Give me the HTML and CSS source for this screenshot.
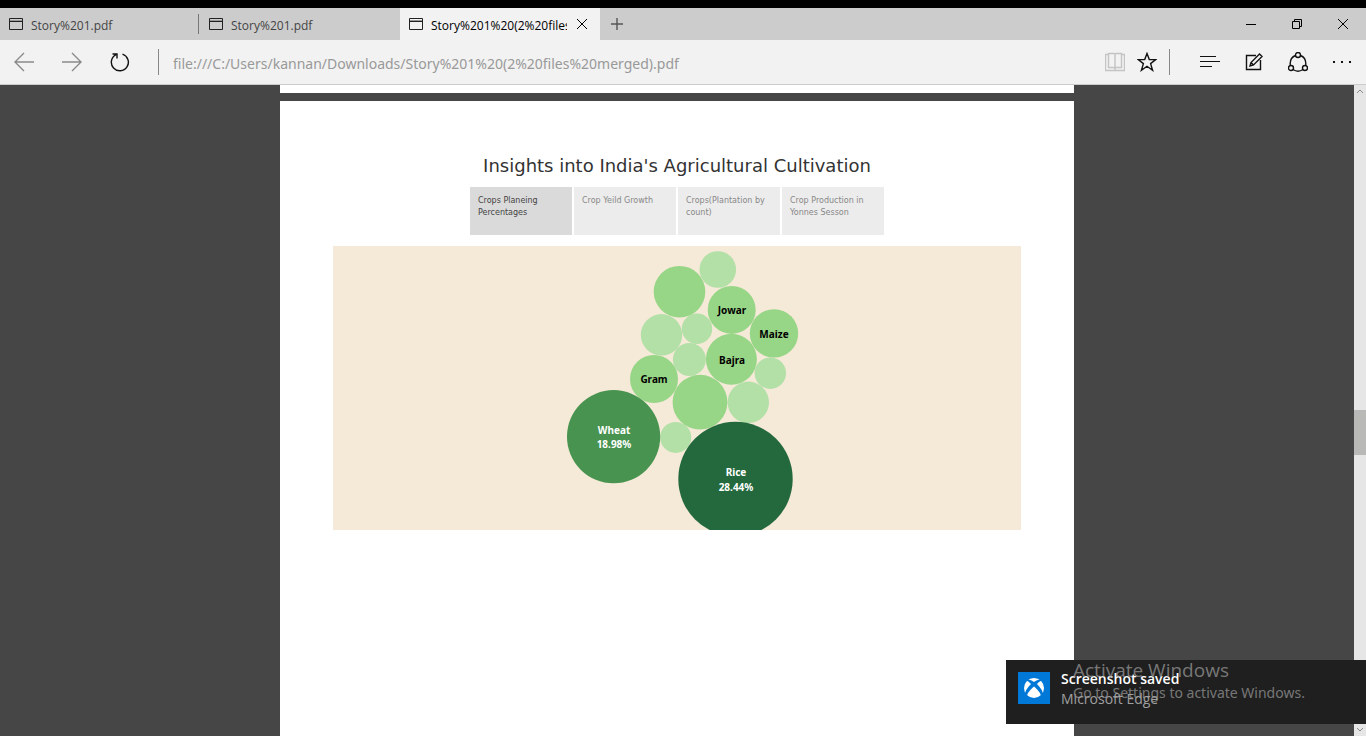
FILE: index.html
```html
<!DOCTYPE html>
<html lang="en">
<head>
<meta charset="utf-8">
<meta name="viewport" content="width=device-width, initial-scale=1">
<title>Story%201%20(2%20files%20merged).pdf</title>
<link rel="stylesheet" href="styles.css">
</head>
<body>
<header class="browser">
  <div class="tab-strip">
    <div class="tab tab-divided">
      <svg class="tab-icon" viewBox="0 0 14 12"><path class="shade" d="M1 2.500h12"/><path d="M.5 .5h13v11H.5zM1 3.500h12"/></svg>
      <button class="tab-title" type="button">Story%201.pdf</button>
    </div>
    <div class="tab">
      <svg class="tab-icon" viewBox="0 0 14 12"><path class="shade" d="M1 2.500h12"/><path d="M.5 .5h13v11H.5zM1 3.500h12"/></svg>
      <button class="tab-title" type="button">Story%201.pdf</button>
    </div>
    <div class="tab tab-active">
      <svg class="tab-icon" viewBox="0 0 14 12"><path class="shade" d="M1 2.500h12"/><path d="M.5 .5h13v11H.5zM1 3.500h12"/></svg>
      <button class="tab-title" type="button">Story%201%20(2%20files%20merged).pdf</button>
      <button class="tab-close" type="button" aria-label="Close tab"><svg width="10" height="10" viewBox="0 0 10 10"><path d="M0 0l10 10M10 0L0 10"/></svg></button>
    </div>
    <button class="new-tab" type="button" aria-label="New tab"><svg class="bold-icon" width="12" height="12" viewBox="0 0 12 12"><path d="M6 0v12M0 6h12"/></svg></button>
    <div class="window-controls">
      <button type="button" aria-label="Minimize"><svg width="10" height="10" viewBox="0 0 10 10"><path d="M0 5.500h10"/></svg></button>
      <button type="button" aria-label="Restore"><svg width="10" height="10" viewBox="0 0 10 10"><path d="M.5 2.500h7v7h-7zM2.500 2.500v-2h7v7h-2"/></svg></button>
      <button type="button" aria-label="Close"><svg width="10" height="10" viewBox="0 0 10 10"><path d="M0 0l10 10M10 0L0 10"/></svg></button>
    </div>
  </div>
  <div class="toolbar">
    <button class="nav-button muted" type="button" aria-label="Back"><svg class="bold-icon" width="20" height="20" viewBox="0 0 20 20"><path d="M20 10H1M10 1L1 10l9 9"/></svg></button>
    <button class="nav-button muted" type="button" aria-label="Forward"><svg class="bold-icon" width="20" height="20" viewBox="0 0 20 20"><path d="M0 10h19M10 1l9 9-9 9"/></svg></button>
    <button class="nav-button" type="button" aria-label="Refresh"><svg class="bold-icon" width="20" height="20" viewBox="0 0 20 20"><path d="M12.500 2.200A8.500 8.500 0 1 1 6 2.700M2.500 2H7v4.500"/></svg></button>
    <span class="divider"></span>
    <input class="address" type="text" aria-label="Address" value="file:///C:/Users/kannan/Downloads/Story%201%20(2%20files%20merged).pdf">
    <button class="page-button faint" type="button" aria-label="Reading view"><svg class="bold-icon" width="20" height="20" viewBox="0 0 20 20"><path d="M3 2.500H.5v16h19v-16H17M3.500 1.500H9l1 1 1-1h5.500v14H11l-1 1-1-1H3.500zM10 2v16"/></svg></button>
    <button class="page-button" type="button" aria-label="Favorite"><svg class="bold-icon" width="20" height="20" viewBox="0 0 20 20"><path d="M10 1.500l2.300 6.100h6.500l-5.200 4 2 6.700L10 14.300l-5.600 4 2-6.700-5.200-4h6.500z"/></svg></button>
    <span class="divider"></span>
    <div class="tools">
      <button type="button" aria-label="Hub"><svg width="20" height="20" viewBox="0 0 20 20"><path d="M0 4.500h16M0 9.500h20M0 14.500h12"/></svg></button>
      <button type="button" aria-label="Make a web note"><svg class="bold-icon" width="18" height="18" viewBox="0 0 18 18"><path d="M11 2.500H1.500v14h14V7M5 13l1-3.500L14.500 1l2.500 2.500L8.500 12zM6 9.500L8.500 12"/></svg></button>
      <button type="button" aria-label="Share"><svg class="bold-icon" width="20" height="20" viewBox="0 0 20 20"><circle cx="10" cy="3" r="2.500"/><circle cx="3" cy="16" r="2.500"/><circle cx="17" cy="16" r="2.500"/><path d="M7.500 3.500C3.500 5 1.800 9 2.300 13.400M12.500 3.500c4 1.500 5.700 5.500 5.200 9.900M5 17.500c3 2 7 2 10 0"/></svg></button>
      <button type="button" aria-label="More"><svg width="18" height="4" viewBox="0 0 18 4"><path class="solid" d="M0 1h2v2H0zM8 1h2v2H8zM16 1h2v2h-2z"/></svg></button>
    </div>
  </div>
</header>

<main class="viewer">
  <div class="document">
    <div class="sheet sheet-end"></div>
    <article class="sheet sheet-current">
      <h1 class="story-title">Insights into India's Agricultural Cultivation</h1>
      <nav class="story-points">
        <button class="point point-active" type="button">Crops Planeing Percentages</button>
        <button class="point" type="button">Crop Yeild Growth</button>
        <button class="point" type="button">Crops(Plantation by count)</button>
        <button class="point" type="button">Crop Production in Yonnes Sesson</button>
      </nav>
      <svg class="chart" viewBox="333 246 688 284" role="img" aria-label="Crop planting percentages">
        <g class="light">
          <circle cx="717.800" cy="269.500" r="18.300"/>
          <circle cx="661.500" cy="334.800" r="20.700"/>
          <circle cx="697" cy="328.700" r="15.200"/>
          <circle cx="689.400" cy="359.400" r="16.500"/>
          <circle cx="770.300" cy="373.200" r="15.700"/>
          <circle cx="748.300" cy="402.300" r="20.700"/>
          <circle cx="675.700" cy="437.400" r="15.500"/>
        </g>
        <g class="medium">
          <circle cx="679.500" cy="291.700" r="25.800"/>
          <circle cx="731.700" cy="309.900" r="24"/>
          <circle cx="774" cy="333.400" r="24.200"/>
          <circle cx="731.400" cy="359.300" r="25.500"/>
          <circle cx="654" cy="379" r="24"/>
          <circle cx="700" cy="402.200" r="27.400"/>
        </g>
        <circle class="wheat" cx="613.600" cy="436.700" r="46.600"/>
        <circle class="rice" cx="735.500" cy="479" r="57.200"/>
        <g class="label">
          <text x="732" y="314">Jowar</text>
          <text x="774" y="338">Maize</text>
          <text x="732" y="364">Bajra</text>
          <text x="654" y="383">Gram</text>
        </g>
        <g class="label label-light">
          <text x="614" y="434">Wheat</text>
          <text x="614" y="448">18.98%</text>
          <text x="736" y="476">Rice</text>
          <text x="736" y="491">28.44%</text>
        </g>
      </svg>
    </article>
  </div>
  <div class="scrollbar">
    <svg width="8" height="5" viewBox="0 0 8 5"><path d="M1 4l3-3 3 3"/></svg>
    <div class="track"><div class="thumb"></div></div>
    <svg width="8" height="5" viewBox="0 0 8 5"><path d="M1 1l3 3 3-3"/></svg>
  </div>
</main>

<aside class="toast">
  <svg class="toast-logo" width="32" height="32" viewBox="0 0 32 32">
    <rect width="32" height="32" fill="#0078d7"/>
    <circle cx="16" cy="16" r="10" fill="#fff"/>
    <path fill="#0078d7" d="M8 8.500C11 6.500 14 8.500 16 10c2-1.500 5-3.500 8-1.500l1 .5c-2-1-4 1-6 3 3 3 6.500 7.500 6 11l-2 2c.5-3.500-4-8-7-10.500C13 17 8.500 21.500 9 25l-2-2c-.5-3.500 3-8 6-11-2-2-4-4-6-3z"/>
  </svg>
  <div class="toast-text">
    <strong class="toast-title">Screenshot saved</strong>
    <span class="toast-source">Microsoft Edge</span>
  </div>
</aside>
<div class="watermark">
  <div class="watermark-title">Activate Windows</div>
  <div class="watermark-text">Go to Settings to activate Windows.</div>
</div>
</body>
</html>
```

FILE: styles.css
```css
* { box-sizing: border-box; }

body {
  margin: 0;
  height: 100vh;
  display: flex;
  flex-direction: column;
  overflow: hidden;
  background: #464646;
  font-family: "Open Sans", "Noto Sans", sans-serif;
}

button {
  margin: 0;
  padding: 0;
  border: 0;
  background: none;
  color: inherit;
  font: inherit;
}

svg { display: block; flex: none; fill: none; stroke: currentColor; }

/* Browser frame */
.browser { flex: none; border-top: 8px solid #000; border-bottom: 1px solid #ccc; }
.tab-strip { display: flex; height: 32px; background: #ccc; }
.tab {
  display: flex;
  align-items: center;
  width: 200px;
  padding-left: 9px;
  color: #444;
  font-size: 12px;
}
.tab-divided { background: linear-gradient(#777, #777) 198px 6px / 1px 20px no-repeat; }
.tab-icon { width: 14px; height: 12px; margin-right: 8px; color: #222; }
.tab-icon .shade { stroke: #999; }
.tab-title { width: 136px; overflow: hidden; padding-top: 2px; text-align: left; white-space: nowrap; }
.tab-active { background: #f2f2f2; color: #000; }
.tab-close { display: grid; place-items: center; width: 30px; height: 32px; }
.new-tab { display: grid; place-items: center; width: 34px; color: #555; }
.window-controls { display: flex; margin-left: auto; color: #000; }
.window-controls button { display: grid; place-items: center; width: 46px; }

.toolbar {
  display: flex;
  align-items: center;
  height: 44px;
  padding-right: 2px;
  background: #f2f2f2;
  color: #111;
}
.toolbar button { display: grid; place-items: center; height: 44px; }
.bold-icon { stroke-width: 1.400; }
.nav-button { width: 48px; }
.toolbar .muted { color: #8a8a8a; }
.toolbar .faint { color: #c4c4c4; }
.divider { flex: none; width: 1px; height: 26px; background: #888; }
.nav-button + .divider { margin-left: 14px; }
.address {
  flex: 1;
  min-width: 0;
  padding: 2px 14px 0;
  border: 0;
  background: none;
  color: #999;
  font-family: "Noto Sans", sans-serif;
  font-size: 14px;
}
.page-button { width: 32px; }
.page-button + .divider { margin-left: 6px; }
.tools { display: flex; margin-left: 18px; }
.tools button { width: 44px; }
.solid { fill: currentColor; stroke: none; }

/* Document viewer */
.viewer { display: flex; flex: 1; min-height: 0; }
.document {
  display: flex;
  flex: 1;
  flex-direction: column;
  align-items: center;
  gap: 8px;
  overflow: hidden;
}
.sheet { width: 100%; max-width: 794px; background: #fff; }
.sheet-end { flex: none; height: 8px; }
.sheet-current {
  display: flex;
  flex: 1;
  flex-direction: column;
  align-items: center;
  padding: 53px 53px 0;
}
.story-title {
  margin: 0 0 9px;
  color: #333;
  font: 18px/24px "DejaVu Sans", sans-serif;
}
.story-points {
  display: grid;
  grid-template-columns: repeat(4, 102px);
  gap: 2px;
  margin-bottom: 11px;
}
.point {
  display: flex;
  min-height: 48px;
  padding: 8px;
  background: #ececec;
  color: #888;
  font: 8px/12px "DejaVu Sans", sans-serif;
  text-align: left;
}
.point-active { background: #dadada; color: #444; }
.chart { width: 100%; background: #f5e9d8; stroke: none; }
.light { fill: #b2e0a7; }
.medium { fill: #98d687; }
.wheat { fill: #47934f; }
.rice { fill: #24693d; }
.label { fill: #000; font-family: "Noto Sans", sans-serif; font-size: 10px; font-weight: 700; text-anchor: middle; }
.label-light { fill: #fff; }

.scrollbar {
  display: flex;
  flex-direction: column;
  align-items: center;
  width: 12px;
  padding: 4px 0;
  background: #e6e6e6;
  color: #888;
}
.track { flex: 1; width: 100%; }
.thumb { height: 45px; background: #b9b9b8; margin-top: 316px; }

/* Desktop overlays */
.toast {
  position: absolute;
  right: 0;
  bottom: 12px;
  display: flex;
  width: 360px;
  height: 64px;
  padding: 12px;
  gap: 11px;
  background: #1f1f1f;
}
.toast-logo { stroke: none; }
.toast-text { display: flex; flex-direction: column; margin-top: -3px; font-size: 14px; line-height: 20px; }
.toast-title { color: #fff; font-weight: 600; }
.toast-source { color: #a0a0a0; }
.watermark {
  position: absolute;
  right: 0;
  bottom: 32px;
  width: 293px;
  color: rgba(160, 160, 160, 0.700);
  white-space: nowrap;
}
.watermark-title { font-size: 19px; line-height: 24px; }
.watermark-text { font-family: "Noto Sans", sans-serif; font-size: 14px; line-height: 22px; }
```
